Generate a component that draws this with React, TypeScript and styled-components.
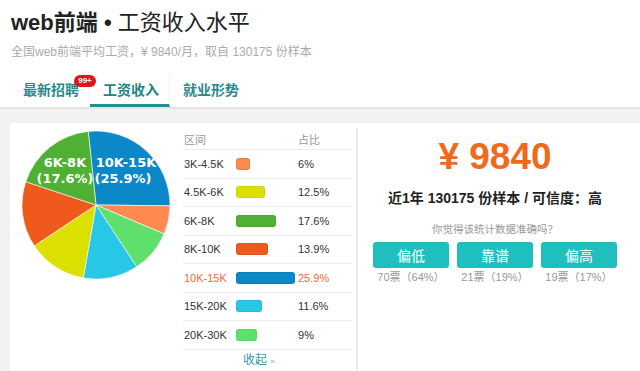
import React from 'react';
import styled, { createGlobalStyle } from 'styled-components';

const FONT = `"Liberation Sans", Arial, "Noto Sans CJK SC", sans-serif`;
const TEAL = '#21918f';

const GlobalStyle = createGlobalStyle`
  html, body {
    margin: 0;
    padding: 0;
    background: #f2f2f2;
    font-family: ${FONT};
    color: #333;
  }
`;

const Header = styled.div`
  background: #fff;
  padding: 8px 10px 0;
  border-bottom: 2px solid #e3e3e3;
`;

const Title = styled.h1`
  margin: 0 0 0 1px;
  font-size: 22px;
  line-height: 30px;
  font-weight: normal;
  color: #222;

  b {
    font-weight: bold;
  }
`;

const Subtitle = styled.div`
  margin: 6px 0 0 1px;
  font-size: 12px;
  line-height: 16px;
  color: #aaa;
`;

const Tabs = styled.div`
  display: flex;
  margin-top: 15px;
  height: 32px;
`;

const Tab = styled.div<{ $active?: boolean; $last?: boolean }>`
  position: relative;
  box-sizing: border-box;
  width: 80px;
  padding-left: 13px;
  font-size: 14px;
  font-weight: bold;
  line-height: 30px;
  color: ${(p) => (p.$active ? '#1f8486' : '#2a8a8c')};
  border-right: 1px solid ${(p) => (p.$last ? 'transparent' : '#f3f3f3')};
  border-bottom: 3px solid ${(p) => (p.$active ? TEAL : 'transparent')};
`;

const Badge = styled.span`
  position: absolute;
  top: 0;
  right: -7px;
  width: 22px;
  height: 12px;
  border-radius: 6px;
  background: #e0141b;
  color: #fff;
  font-size: 8px;
  font-weight: bold;
  line-height: 12px;
  text-align: center;
  z-index: 2;
`;

const Main = styled.div`
  padding: 14px 0 0 10px;
`;

const Card = styled.div`
  display: flex;
  background: #fff;
  padding-bottom: 30px;
`;

const LeftPane = styled.div`
  display: flex;
  width: 346px;
`;

const PieBox = styled.div`
  padding: 8px 13px 0 12px;
`;

const Table = styled.div`
  width: 169px;
  margin-top: 5px;
`;

const Row = styled.div<{ $head?: boolean; $hot?: boolean }>`
  display: grid;
  grid-template-columns: 52px 62px 1fr;
  align-items: center;
  box-sizing: border-box;
  height: ${(p) => (p.$head ? '22px' : '28.5px')};
  padding-left: 1px;
  border-bottom: 1px solid #ececec;
  font-size: 11px;
  color: ${(p) => (p.$head ? '#999' : p.$hot ? '#f0693a' : '#333')};
`;

const Bar = styled.div<{ $color: string }>`
  height: 12px;
  border-radius: 3px;
  background: ${(p) => p.$color};
  box-shadow: inset 0 0 0 1px rgba(0, 0, 0, 0.06);
`;

const Collapse = styled.div`
  padding-left: 60px;
  margin-top: 2px;
  font-size: 12px;
  line-height: 16px;
  color: #3597a3;

  small {
    font-size: 8px;
    color: #8ab;
  }
`;

const Divider = styled.div`
  width: 2px;
  margin-top: 5px;
  background: #ececec;
`;

const RightPane = styled.div`
  width: 274px;
  padding-top: 13px;
  display: flex;
  flex-direction: column;
  align-items: center;
`;

const Price = styled.div`
  font-size: 37px;
  line-height: 42px;
  font-weight: bold;
  color: #f3691b;
`;

const Sample = styled.div`
  margin-top: 10px;
  font-size: 14px;
  line-height: 20px;
  font-weight: bold;
  color: #222;
`;

const Question = styled.div`
  margin-top: 13px;
  font-size: 10.5px;
  line-height: 16px;
  color: #999;
`;

const Votes = styled.div`
  display: flex;
  gap: 8px;
  margin-top: 5px;
`;

const VoteCol = styled.div`
  display: flex;
  flex-direction: column;
  align-items: center;
  width: 76px;
`;

const VoteButton = styled.button`
  width: 76px;
  height: 26px;
  border: none;
  border-radius: 3px;
  background: #20bfbf;
  color: #fff;
  font-family: ${FONT};
  font-size: 14px;
  padding: 0;
`;

const VoteCount = styled.div`
  margin-top: 2px;
  font-size: 11px;
  line-height: 14px;
  color: #999;
  white-space: nowrap;
`;

type Slice = { range: string; pct: number; color: string };

const rows: Slice[] = [
  { range: '3K-4.5K', pct: 6, color: '#fe8a52' },
  { range: '4.5K-6K', pct: 12.5, color: '#dbe000' },
  { range: '6K-8K', pct: 17.6, color: '#50b033' },
  { range: '8K-10K', pct: 13.9, color: '#ef5a1c' },
  { range: '10K-15K', pct: 25.9, color: '#0c87c8' },
  { range: '15K-20K', pct: 11.6, color: '#28c7e6' },
  { range: '20K-30K', pct: 9, color: '#5fe06c' },
];

// order the pie is drawn in, clockwise from the top
const pieOrder = ['10K-15K', '3K-4.5K', '20K-30K', '15K-20K', '4.5K-6K', '8K-10K', '6K-8K'];

const Pie: React.FC = () => {
  const cx = 74;
  const cy = 74;
  const r = 74;
  const total = rows.reduce((s, d) => s + d.pct, 0);
  let angle = -6;
  const point = (deg: number) => {
    const rad = (deg * Math.PI) / 180;
    return [cx + r * Math.sin(rad), cy - r * Math.cos(rad)];
  };
  const paths = pieOrder.map((name) => {
    const d = rows.find((x) => x.range === name)!;
    const sweep = (d.pct / total) * 360;
    const [x1, y1] = point(angle);
    const [x2, y2] = point(angle + sweep);
    angle += sweep;
    const large = sweep > 180 ? 1 : 0;
    return (
      <path
        key={name}
        d={`M${cx},${cy} L${x1},${y1} A${r},${r} 0 ${large} 1 ${x2},${y2} Z`}
        fill={d.color}
        stroke="#fff"
        strokeWidth={0.6}
      />
    );
  });
  return (
    <svg width={148} height={148} viewBox="0 0 148 148">
      {paths}
      <g fill="#fff" fontFamily="DejaVu Sans, sans-serif" fontWeight="bold" fontSize="13" textAnchor="middle">
        <text x={43} y={36}>6K-8K</text>
        <text x={43} y={52}>(17.6%)</text>
        <text x={104} y={36}>10K-15K</text>
        <text x={101} y={52}>(25.9%)</text>
      </g>
    </svg>
  );
};

const App: React.FC = () => {
  return (
    <>
      <GlobalStyle />
      <Header>
        <Title>
          <b>web前端 •</b> 工资收入水平
        </Title>
        <Subtitle>全国web前端平均工资，¥ 9840/月，取自 130175 份样本</Subtitle>
        <Tabs>
          <Tab>
            最新招聘
            <Badge>99+</Badge>
          </Tab>
          <Tab $active>工资收入</Tab>
          <Tab $last>就业形势</Tab>
        </Tabs>
      </Header>

      <Main>
        <Card>
          <LeftPane>
            <PieBox>
              <Pie />
            </PieBox>
            <Table>
              <Row $head>
                <span>区间</span>
                <span />
                <span>占比</span>
              </Row>
              {rows.map((d) => (
                <Row key={d.range} $hot={d.range === '10K-15K'}>
                  <span>{d.range}</span>
                  <Bar $color={d.color} style={{ width: `${d.pct * 2.28}px` }} />
                  <span>{d.pct}%</span>
                </Row>
              ))}
              <Collapse>
                收起 <small>»</small>
              </Collapse>
            </Table>
          </LeftPane>

          <Divider />

          <RightPane>
            <Price>¥ 9840</Price>
            <Sample>近1年 130175 份样本 / 可信度：高</Sample>
            <Question>你觉得该统计数据准确吗？</Question>
            <Votes>
              <VoteCol>
                <VoteButton>偏低</VoteButton>
                <VoteCount>70票（64%）</VoteCount>
              </VoteCol>
              <VoteCol>
                <VoteButton>靠谱</VoteButton>
                <VoteCount>21票（19%）</VoteCount>
              </VoteCol>
              <VoteCol>
                <VoteButton>偏高</VoteButton>
                <VoteCount>19票（17%）</VoteCount>
              </VoteCol>
            </Votes>
          </RightPane>
        </Card>
      </Main>
    </>
  );
};

export default App;
